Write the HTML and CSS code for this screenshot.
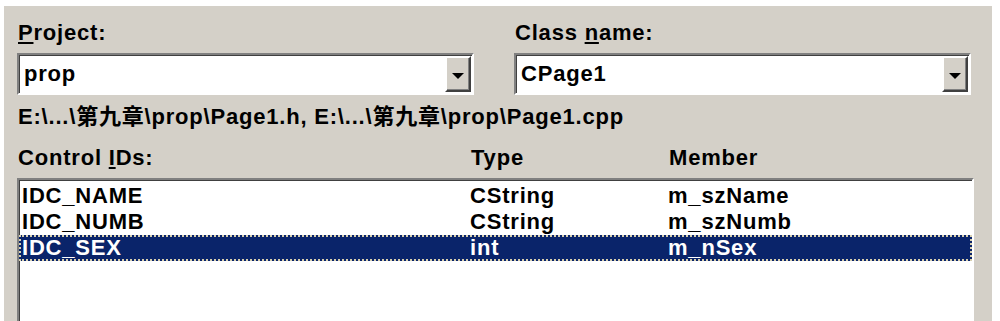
FILE: index.html
```html
<!DOCTYPE html>
<html lang="zh-CN">
<head>
    <meta charset="UTF-8">
    <title>MFC ClassWizard - Member Variables</title>
    <link rel="stylesheet" href="styles.css">
</head>
<body>
    <div class="dialog">
        <div class="top-row">
            <div class="field">
                <label class="label"><u>P</u>roject:</label>
                <div class="combo">
                    <span class="combo-text">prop</span>
                    <span class="drop-btn"><span class="arrow"></span></span>
                </div>
            </div>
            <div class="field">
                <label class="label">Class <u>n</u>ame:</label>
                <div class="combo">
                    <span class="combo-text">CPage1</span>
                    <span class="drop-btn"><span class="arrow"></span></span>
                </div>
            </div>
        </div>

        <div class="files">E:\...\第九章\prop\Page1.h, E:\...\第九章\prop\Page1.cpp</div>

        <div class="list-head">
            <span>Control <u>I</u>Ds:</span>
            <span>Type</span>
            <span>Member</span>
        </div>

        <div class="listbox">
            <div class="row">
                <span>IDC_NAME</span>
                <span>CString</span>
                <span>m_szName</span>
            </div>
            <div class="row">
                <span>IDC_NUMB</span>
                <span>CString</span>
                <span>m_szNumb</span>
            </div>
            <div class="row selected">
                <span>IDC_SEX</span>
                <span>int</span>
                <span>m_nSex</span>
            </div>
        </div>
    </div>
</body>
</html>
```

FILE: styles.css
```css
html, body {
    margin: 0;
    padding: 0;
    background: #fff;
    overflow: hidden;
}
body {
    font-family: "Liberation Sans", Arial, "Noto Sans CJK SC", sans-serif;
    font-size: 22px;
    font-weight: bold;
    line-height: 24px;
    letter-spacing: 0.8px;
    color: #000;
}
.dialog {
    margin: 6px 0 0 4px;
    width: 988px;
    height: 330px;
    padding: 15px 0 0 13px;
    background: #d4d0c8;
    box-sizing: border-box;
    overflow: hidden;
}
.top-row {
    display: flex;
    gap: 40px;
}
.field {
    width: 457px;
}
.label {
    display: block;
    padding-left: 1px;
    margin-bottom: 8px;
}
.combo {
    display: flex;
    align-items: flex-start;
    height: 42px;
    background: #fff;
    border: 2px solid;
    border-color: #808080 #fff #fff #808080;
    box-shadow: inset 1px 1px 0 #404040;
    box-sizing: border-box;
}
.combo-text {
    flex: 1;
    padding: 7px 0 0 5px;
}
.drop-btn {
    display: flex;
    align-items: center;
    justify-content: center;
    width: 26px;
    height: 36px;
    margin: 1px 1px 0 0;
    background: #d4d0c8;
    border: 2px solid;
    border-color: #fff #404040 #404040 #fff;
    box-shadow: inset -1px -1px 0 #808080;
    box-sizing: border-box;
}
.arrow {
    width: 0;
    height: 0;
    margin-top: 3px;
    border-left: 6px solid transparent;
    border-right: 6px solid transparent;
    border-top: 6px solid #000;
}
.files {
    margin-top: 10px;
    padding-left: 1px;
}
.list-head {
    display: grid;
    grid-template-columns: 453px 198px auto;
    margin-top: 17px;
    padding-left: 1px;
}
.listbox {
    margin-top: 8px;
    width: 957px;
    height: 160px;
    padding-top: 3px;
    background: #fff;
    border: 2px solid;
    border-color: #808080 #fff #fff #808080;
    box-shadow: inset 1px 1px 0 #404040;
    box-sizing: border-box;
}
.row {
    display: grid;
    grid-template-columns: 448px 198px auto;
    height: 26px;
    line-height: 26px;
    padding-left: 3px;
    box-sizing: border-box;
}
.row.selected {
    background: #0a246a;
    color: #fff;
    outline: 2px dotted #d8d0b0;
    outline-offset: -2px;
}
```
